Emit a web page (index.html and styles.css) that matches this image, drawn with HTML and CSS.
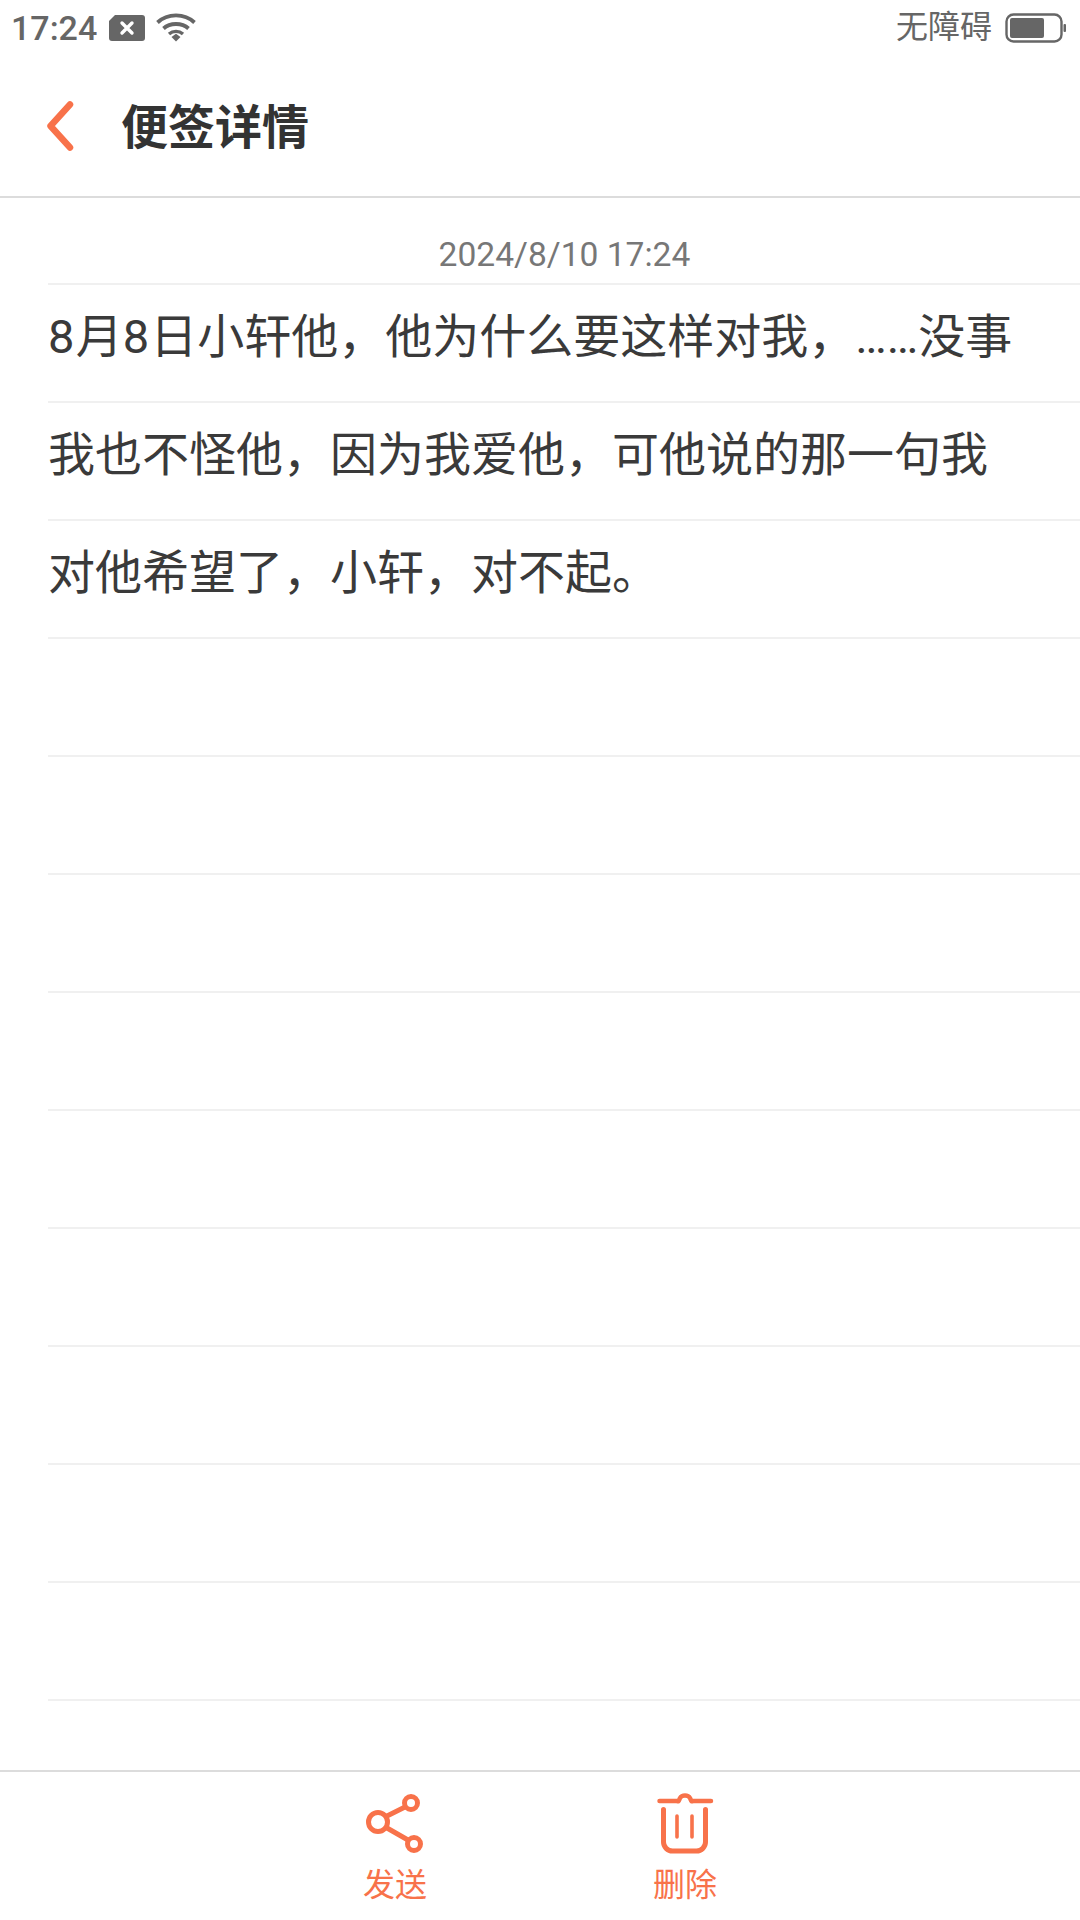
FILE: index.html
```html
<!doctype html>
<html lang="zh-CN">
  <head>
    <meta charset="utf-8" />
    <meta name="viewport" content="width=device-width, initial-scale=1" />
    <title>便签详情</title>
    <link rel="stylesheet" href="styles.css">
  </head>

  <body>
    <!-- Status bar -->
    <div class="status-bar">
      <span class="status-time">17:24</span>
      <svg class="status-sim" width="36" height="26" viewBox="0 0 36 26">
        <path d="M6 0H33a3 3 0 0 1 3 3V23a3 3 0 0 1-3 3H3a3 3 0 0 1-3-3V6Z" fill="#666" />
        <path d="M13 8L23 18M23 8L13 18" stroke="#fff" stroke-width="3.4" stroke-linecap="round" />
      </svg>
      <svg class="status-wifi" width="40" height="29" viewBox="0 0 40 29">
        <path d="M1.5 9.5C11.5 0 28.500 0 38.500 9.500" fill="none" stroke="#666" stroke-width="3.800" />
        <path d="M7.500 15.500C14 9.500 26 9.500 32.500 15.500" fill="none" stroke="#666" stroke-width="3.800" />
        <path d="M13 21C17 17.500 23 17.500 27 21" fill="none" stroke="#666" stroke-width="3.400" />
        <path d="M15.500 24L20 20.800L24.500 24L20 28.500Z" fill="#666" />
      </svg>
      <span class="status-spacer"></span>
      <span class="status-label">无障碍</span>
      <svg class="status-battery" width="61" height="30" viewBox="0 0 61 30">
        <rect x="1.500" y="1.500" width="55" height="27" rx="7" fill="none" stroke="#666" stroke-width="2.400" />
        <rect x="5" y="5" width="34" height="20" rx="2" fill="#666" />
        <rect x="58.500" y="11" width="2.500" height="8" rx="1" fill="#666" />
      </svg>
    </div>

    <header class="title-bar">
      <svg class="back-icon" width="27" height="50" viewBox="0 0 27 50">
        <path d="M23 3.500L3.500 25L23 46.500" fill="none" stroke="#f8724a" stroke-width="6.500" stroke-linecap="round" stroke-linejoin="round" />
      </svg>
      <h1>便签详情</h1>
    </header>

    <main class="note">
      <p class="note-date">2024/8/10 17:24</p>
      <div class="note-lines">
        <div class="note-line"><span class="digit">8</span>月<span class="digit">8</span>日小轩他，他为什么要这样对我，……没事</div>
        <div class="note-line">我也不怪他，因为我爱他，可他说的那一句我</div>
        <div class="note-line">对他希望了，小轩，对不起。</div>
        <div class="note-line"></div>
        <div class="note-line"></div>
        <div class="note-line"></div>
        <div class="note-line"></div>
        <div class="note-line"></div>
        <div class="note-line"></div>
        <div class="note-line"></div>
        <div class="note-line"></div>
        <div class="note-line"></div>
      </div>
    </main>

    <footer class="actions">
      <button class="action" type="button">
        <svg width="60" height="64" viewBox="0 0 60 64">
          <circle cx="13" cy="30" r="9.500" fill="none" stroke="#f8724a" stroke-width="5" />
          <circle cx="46" cy="11" r="6.500" fill="none" stroke="#f8724a" stroke-width="5" />
          <circle cx="49" cy="52" r="6.500" fill="none" stroke="#f8724a" stroke-width="5" />
          <path d="M22 24L40 15M22 36L43 48" fill="none" stroke="#f8724a" stroke-width="5" />
        </svg>
        <span>发送</span>
      </button>
      <button class="action" type="button">
        <svg width="60" height="64" viewBox="0 0 60 64">
          <path d="M4.500 9H22C24 10 24 8 25 6C27 2.500 33 2.500 35 6C36 8 36 10 38 9H56" fill="none" stroke="#f8724a" stroke-width="4.500" stroke-linecap="round" />
          <path d="M8.500 17.500V50a9 9 0 0 0 9 9H41.500a9 9 0 0 0 9-9V17.500" fill="none" stroke="#f8724a" stroke-width="5" stroke-linecap="round" />
          <path d="M22 24V45M37 24V45" fill="none" stroke="#f8724a" stroke-width="3.600" stroke-linecap="round" />
        </svg>
        <span>删除</span>
      </button>
    </footer>
  </body>
</html>
```

FILE: styles.css
```css
body {
  margin: 0;
  height: 1920px;
  display: flex;
  flex-direction: column;
  overflow: hidden;
  background-color: #fff;
  color: #333;
  font-family: Roboto, "Noto Sans CJK SC", sans-serif;
}

.status-bar {
  height: 55px;
  display: flex;
  align-items: center;
  padding: 0 14px 0 11px;
  color: #666;
}

.status-time {
  font-size: 34px;
  font-weight: 500;
}

.status-sim {
  margin-left: 12px;
}

.status-wifi {
  margin-left: 11px;
}

.status-spacer {
  flex: 1;
}

.status-label {
  margin-bottom: 7px;
  font-size: 32px;
}

.status-battery {
  margin-left: 13px;
}

.title-bar {
  height: 143px;
  box-sizing: border-box;
  display: flex;
  align-items: center;
  padding-left: 47px;
  border-bottom: 2px solid #dcdcdc;
}

.title-bar h1 {
  margin: 0 0 4px 47px;
  font-size: 47px;
  font-weight: 700;
}

.note {
  flex: 1;
}

.note-date {
  margin: 0;
  height: 85px;
  box-sizing: border-box;
  padding: 37px 0 0 49px;
  text-align: center;
  font-size: 33.6px;
  line-height: 40px;
  color: #777;
}

.note-lines {
  margin-left: 48px;
  border-top: 2px solid #f0f0f0;
}

.note-line {
  height: 118px;
  box-sizing: border-box;
  border-bottom: 2px solid #f0f0f0;
  color: #3a3a3a;
  font-size: 47px;
  line-height: 103px;
  white-space: nowrap;
}

.digit {
  letter-spacing: 1.2px;
}

.actions {
  height: 150px;
  box-sizing: border-box;
  display: flex;
  justify-content: center;
  gap: 150px;
  border-top: 2px solid #dcdcdc;
}

.action {
  width: 140px;
  padding: 20px 0 0;
  display: flex;
  flex-direction: column;
  align-items: center;
  background: none;
  border: none;
  color: #f8724a;
  font-family: inherit;
  font-size: 32px;
  cursor: pointer;
}

.action span {
  margin-top: 6px;
  line-height: 46px;
}
```
